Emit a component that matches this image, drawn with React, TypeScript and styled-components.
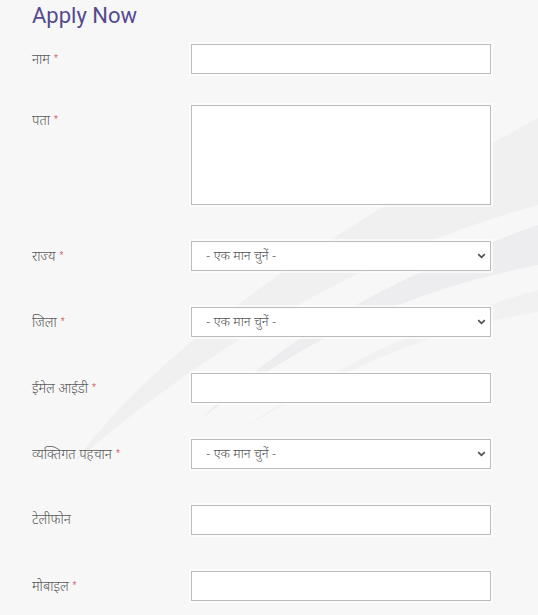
import React from 'react';
import styled, { createGlobalStyle } from 'styled-components';

const GlobalStyle = createGlobalStyle`
  html, body {
    margin: 0;
    padding: 0;
    background: #f7f7f7;
  }
  body {
    font-family: "Noto Sans Devanagari", "Noto Sans", "Open Sans", sans-serif;
  }
`;

const Page = styled.div`
  position: relative;
  min-height: 615px;
  overflow: hidden;
`;

const Swoosh = styled.svg`
  position: absolute;
  left: 0;
  top: 0;
  width: 538px;
  height: 615px;
  pointer-events: none;
`;

const Form = styled.form`
  position: relative;
  padding: 0 0 0 32px;
`;

const Title = styled.h2`
  margin: 0;
  padding: 2px 0 0;
  height: 42px;
  font-family: Roboto, "Liberation Sans", sans-serif;
  font-weight: 400;
  font-size: 22px;
  line-height: 28px;
  color: #554a8e;
`;

const Row = styled.div<{ $gap: number }>`
  display: grid;
  grid-template-columns: 159px 300px;
  align-items: start;
  margin-bottom: ${(p) => p.$gap}px;
`;

const Label = styled.label`
  box-sizing: border-box;
  height: 30px;
  padding-top: 3px;
  font-size: 13.5px;
  font-weight: 300;
  line-height: 27px;
  color: #5a5a5a;
`;

const Req = styled.span`
  position: relative;
  top: -2px;
  margin-left: 4px;
  font-family: "Liberation Sans", sans-serif;
  font-size: 10px;
  color: #d2646a;
`;

const fieldBase = `
  box-sizing: border-box;
  width: 300px;
  margin: 0;
  border: 1px solid #bcbcbc;
  border-radius: 0;
  background: #fff;
  box-shadow: 0 0 0 2px rgba(255, 255, 255, 0.6);
  outline: none;
`;

const TextInput = styled.input`
  ${fieldBase}
  height: 30px;
  padding: 0 12px;
`;

const TextArea = styled.textarea`
  ${fieldBase}
  display: block;
  height: 100px;
  resize: none;
  padding: 6px 12px;
`;

const SelectWrap = styled.div`
  position: relative;
  width: 300px;
  height: 30px;
`;

const Select = styled.select`
  ${fieldBase}
  height: 30px;
  appearance: none;
  padding: 0 14px;
  font-family: "Noto Sans Devanagari", "Noto Sans", sans-serif;
  font-size: 13px;
  font-weight: 300;
  color: #555;
`;

const Chevron = styled.svg`
  position: absolute;
  right: 5px;
  top: 12px;
  width: 9px;
  height: 6px;
  pointer-events: none;
`;

type Field = {
  label: string;
  required?: boolean;
  kind: 'text' | 'area' | 'select';
  gap: number;
};

const fields: Field[] = [
  { label: 'नाम', required: true, kind: 'text', gap: 31 },
  { label: 'पता', required: true, kind: 'area', gap: 36 },
  { label: 'राज्य', required: true, kind: 'select', gap: 36 },
  { label: 'जिला', required: true, kind: 'select', gap: 36 },
  { label: 'ईमेल आईडी', required: true, kind: 'text', gap: 36 },
  { label: 'व्यक्तिगत पहचान', required: true, kind: 'select', gap: 36 },
  { label: 'टेलीफोन', kind: 'text', gap: 36 },
  { label: 'मोबाइल', required: true, kind: 'text', gap: 0 },
];

function FieldControl({ kind }: { kind: Field['kind'] }) {
  if (kind === 'area') return <TextArea />;
  if (kind === 'select') {
    return (
      <SelectWrap>
        <Select defaultValue="">
          <option value="">- एक मान चुनें -</option>
        </Select>
        <Chevron viewBox="0 0 9 6">
          <path d="M1.2 1.2 L4.5 4.4 L7.8 1.2" fill="none" stroke="#505050" strokeWidth="1.7" />
        </Chevron>
      </SelectWrap>
    );
  }
  return <TextInput type="text" />;
}

export default function App() {
  return (
    <Page>
      <GlobalStyle />
      <Swoosh viewBox="0 0 538 615">
        <path
          d="M75 462 C160 345 330 230 538 118 L538 205 C390 245 220 335 75 462 Z"
          fill="#f0f0f1"
        />
        <path
          d="M200 420 C290 330 410 270 538 225 L538 265 C410 290 300 340 200 420 Z"
          fill="#ededef"
        />
        <path
          d="M240 430 C330 370 430 320 538 290 L538 312 C430 330 340 370 240 430 Z"
          fill="#f1f1f2"
        />
      </Swoosh>
      <Form>
        <Title>Apply Now</Title>
        {fields.map((f) => (
          <Row key={f.label} $gap={f.gap}>
            <Label>
              {f.label}
              {f.required && <Req>*</Req>}
            </Label>
            <FieldControl kind={f.kind} />
          </Row>
        ))}
      </Form>
    </Page>
  );
}
